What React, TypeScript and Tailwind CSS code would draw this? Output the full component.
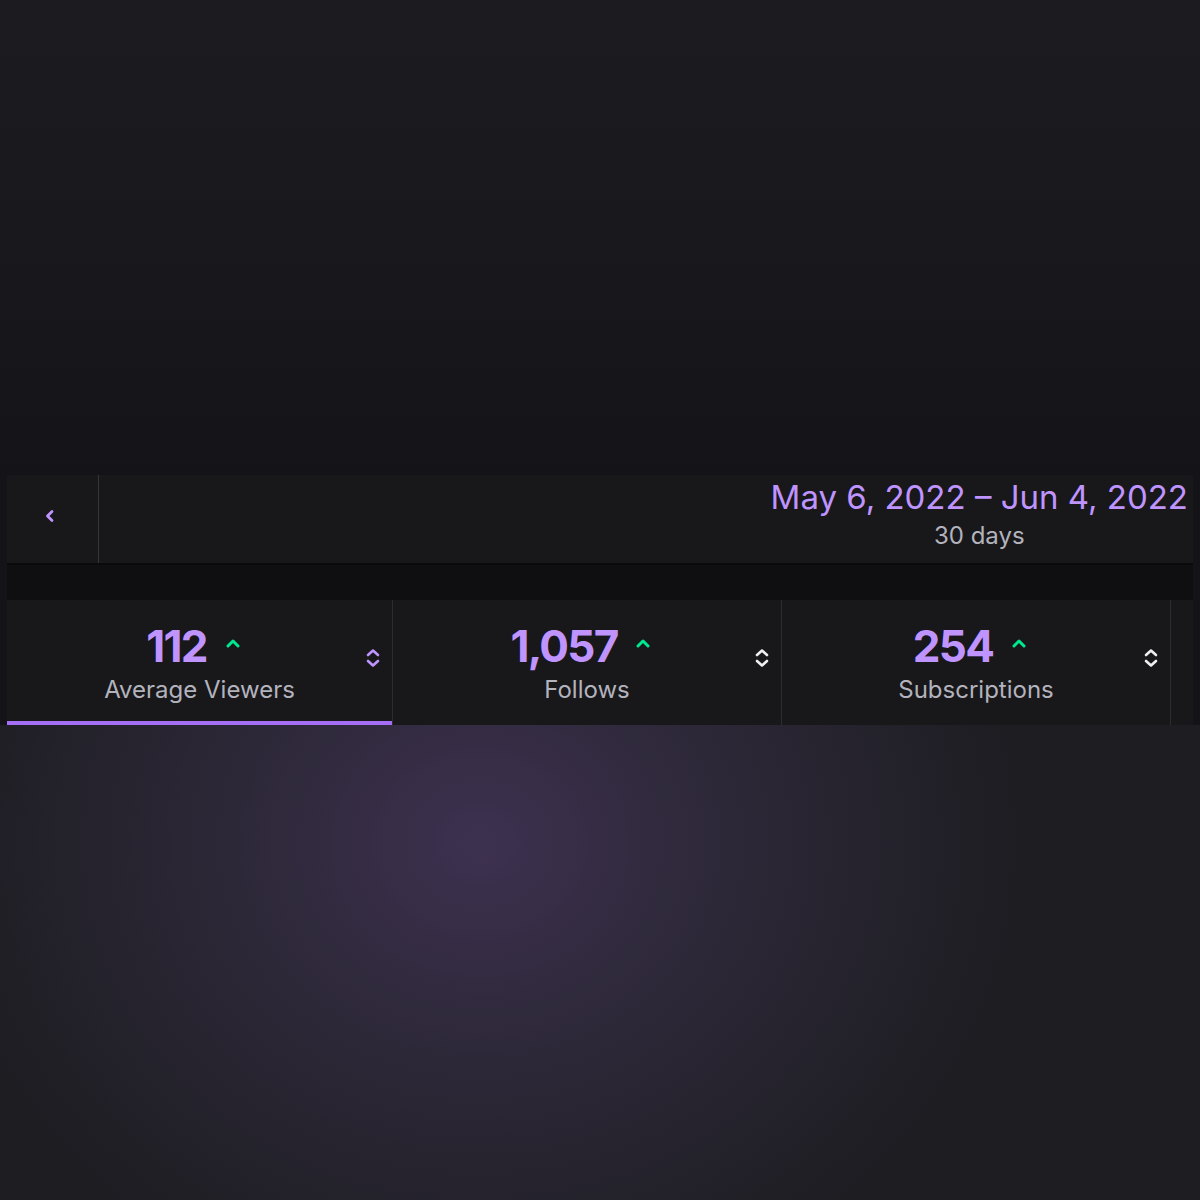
import React from "react";

const font = { fontFamily: "Inter, 'Noto Sans', sans-serif" };

function Caret() {
  return (
    <svg width="16" height="10" viewBox="0 0 16 10" className="ml-[18px] mb-[6px]">
      <path d="M3 8 L8 3 L13 8" fill="none" stroke="#00e88f" strokeWidth="3" strokeLinecap="round" strokeLinejoin="round" />
    </svg>
  );
}

function Sort({ color }: { color: string }) {
  return (
    <svg width="16" height="22" viewBox="0 0 16 22">
      <path d="M3 8 L8 3.5 L13 8" fill="none" stroke={color} strokeWidth="2.6" strokeLinecap="round" strokeLinejoin="round" />
      <path d="M3 14 L8 18.5 L13 14" fill="none" stroke={color} strokeWidth="2.6" strokeLinecap="round" strokeLinejoin="round" />
    </svg>
  );
}

function Stat({ value, label, active, w }: { value: string; label: string; active?: boolean; w: string }) {
  return (
    <div className={`relative flex h-full ${w} items-center border-r border-[#2c2c32] bg-[#18181b]`}>
      <div className="flex flex-1 flex-col items-center">
        <div className="flex items-center pr-[12px]">
          <span className="text-[44px] font-bold leading-none tracking-[-0.04em] text-[#bf94ff]">{value}</span>
          <Caret />
        </div>
        <span className="mt-[10px] text-[24px] leading-none text-[#b3b3bd]">{label}</span>
      </div>
      <div className="absolute right-[11px] top-[47px]">
        <Sort color={active ? "#bf94ff" : "#efeff1"} />
      </div>
      {active && <div className="absolute bottom-0 left-0 right-0 h-[4px] bg-[#a46ff5]" />}
    </div>
  );
}

export default function App() {
  return (
    <div className="flex h-[1200px] w-full flex-col overflow-hidden bg-[#1b1b20]" style={font}>
      <div className="h-[475px] w-full bg-[linear-gradient(180deg,#1b1b20_0%,#18181c_60%,#141418_100%)]" />
      <div className="flex w-full bg-[#141418] px-[7px]">
        <div className="flex w-full flex-col">
          <div className="flex h-[88px] w-full bg-[#18181b]">
            <div className="flex h-full w-[92px] items-center justify-center border-r border-[#34343a] pb-[6px] pr-[6px]">
              <svg width="12" height="14" viewBox="0 0 12 14">
                <path d="M8 2.5 L3.5 7 L8 11.5" fill="none" stroke="#bf94ff" strokeWidth="2.8" strokeLinecap="round" strokeLinejoin="round" />
              </svg>
            </div>
            <div className="flex flex-1 justify-end pr-[5px]">
              <div className="flex flex-col items-center pt-[2px]">
                <span className="text-[33px] leading-[40px] text-[#bf94ff]">May 6, 2022 – Jun 4, 2022</span>
                <span className="mt-[4px] text-[24px] leading-[30px] text-[#b3b3bd]">30 days</span>
              </div>
            </div>
          </div>
          <div className="h-[37px] w-full border-t-2 border-[#0a0a0c] bg-[#0f0f11]" />
          <div className="flex h-[125px] w-full bg-[#18181b]">
            <Stat value="112" label="Average Viewers" active w="w-[386px]" />
            <Stat value="1,057" label="Follows" w="w-[389px]" />
            <Stat value="254" label="Subscriptions" w="w-[389px]" />
          </div>
        </div>
      </div>
      <div className="flex-1 w-full bg-[radial-gradient(ellipse_540px_480px_at_40%_25%,#3d3150_0%,#2d2838_45%,#1d1d22_100%)]" />
    </div>
  );
}
